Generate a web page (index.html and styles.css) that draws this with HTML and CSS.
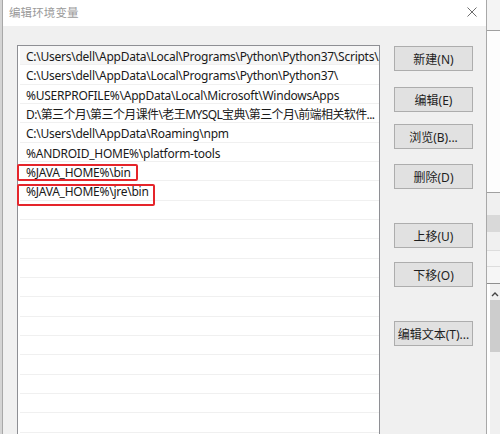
FILE: index.html
```html
<!DOCTYPE html>
<html lang="zh-CN">
<head>
<meta charset="utf-8">
<title>编辑环境变量</title>
<link rel="stylesheet" href="styles.css">
</head>
<body>
<div class="screen">
  <div class="bg-left"></div>
  <div class="dialog">
    <div class="titlebar">
      <span class="title">编辑环境变量</span>
      <svg class="close" width="10" height="10" viewBox="0 0 10 10"><path d="M0.5 0.5 L9.5 9.5 M9.5 0.5 L0.5 9.5" stroke="#6d6d6d" stroke-width="1" fill="none"/></svg>
    </div>
    <div class="body">
      <div class="list">
        <div class="row first"><span class="txt">C:\Users\dell\AppData\Local\Programs\Python\Python37\Scripts\</span></div>
        <div class="row"><span class="txt">C:\Users\dell\AppData\Local\Programs\Python\Python37\</span></div>
        <div class="row"><span class="txt">%USERPROFILE%\AppData\Local\Microsoft\WindowsApps</span></div>
        <div class="row cjk"><span class="txt">D:\第三个月\第三个月课件\老王MYSQL宝典\第三个月\前端相关软件...</span></div>
        <div class="row"><span class="txt">C:\Users\dell\AppData\Roaming\npm</span></div>
        <div class="row"><span class="txt">%ANDROID_HOME%\platform-tools</span></div>
        <div class="row"><span class="txt">%JAVA_HOME%\bin</span><span class="mark mark-a"></span></div>
        <div class="row"><span class="txt">%JAVA_HOME%\jre\bin</span><span class="mark mark-b"></span></div>
        <div class="row"></div>
        <div class="row"></div>
        <div class="row"></div>
        <div class="row"></div>
        <div class="row"></div>
        <div class="row"></div>
        <div class="row"></div>
        <div class="row"></div>
        <div class="row"></div>
        <div class="row"></div>
        <div class="row"></div>
        <div class="row"></div>
      </div>
      <div class="buttons">
        <button class="btn b-new">新建(N)</button>
        <button class="btn b-edit">编辑(E)</button>
        <button class="btn b-browse">浏览(B)...</button>
        <button class="btn b-del">删除(D)</button>
        <button class="btn b-up">上移(U)</button>
        <button class="btn b-down">下移(O)</button>
        <button class="btn b-text">编辑文本(T)...</button>
      </div>
    </div>
  </div>
  <div class="bg-right">
    <div class="br br-top"></div>
    <div class="br br-white"></div>
    <div class="br br-a"></div>
    <div class="br br-b"></div>
    <div class="br br-c"></div>
    <div class="br br-d"></div>
    <div class="br br-e"></div>
    <div class="br-scroll">
      <div class="sb-gap"></div>
      <div class="sb-track">
        <svg class="sb-arrow" width="8" height="6" viewBox="0 0 8 6"><path d="M1 5 L4 2 L7 5" stroke="#444" stroke-width="1.4" fill="none"/></svg>
        <div class="sb-thumb"></div>
      </div>
    </div>
  </div>
</div>
</body>
</html>
```

FILE: styles.css
```css
html, body {
  margin: 0;
  padding: 0;
  width: 500px;
  height: 434px;
  overflow: hidden;
  background: #f0f0f0;
}

.screen {
  display: flex;
  width: 500px;
  height: 434px;
  font-family: "Noto Sans", "Noto Sans CJK SC", sans-serif;
}

.bg-left {
  width: 2px;
  flex: none;
  background: #d4d4d4;
}

.dialog {
  width: 485px;
  flex: none;
  box-sizing: border-box;
  border-left: 1px solid #a8a8a8;
  border-right: 1px solid #a8a8a8;
  display: flex;
  flex-direction: column;
  background: #f0f0f0;
}

.titlebar {
  height: 26px;
  flex: none;
  background: #ffffff;
  display: flex;
  align-items: center;
  justify-content: space-between;
  padding: 0 9px 3px 6px;
  box-sizing: border-box;
}

.title {
  font-size: 11.5px;
  color: #9a9a9a;
  letter-spacing: 0.1px;
}

.close {
  display: block;
}

.body {
  flex: 1;
  display: flex;
  padding: 19px 13px 0 14px;
  gap: 14px;
  overflow: hidden;
}

.list {
  width: 363px;
  flex: none;
  height: 420px;
  box-sizing: border-box;
  border: 1px solid #8e8f94;
  background: #ffffff;
  padding-left: 2px;
}

.row {
  position: relative;
  height: 19.33px;
  box-sizing: border-box;
  border-bottom: 1px solid #f0f0f0;
  display: flex;
  align-items: flex-start;
  padding: 2px 0 0 6px;
  font-size: 12px;
  letter-spacing: -0.25px;
  color: #1a1a1a;
  white-space: nowrap;
}

.row.first {
  background: #f6f6f6;
}

.row.cjk {
  letter-spacing: -0.6px;
}

.txt {
  line-height: 17px;
}

.mark {
  position: absolute;
  left: -3px;
  border: 2px solid #e5252b;
  border-radius: 2px;
  box-sizing: border-box;
}

.mark-a {
  top: 2px;
  width: 121px;
  height: 17px;
}

.mark-b {
  top: 3px;
  width: 138px;
  height: 22px;
}

.buttons {
  width: 79px;
  flex: none;
  display: flex;
  flex-direction: column;
  padding-top: 1px;
}

.btn {
  height: 25px;
  margin: 0;
  padding: 0;
  box-sizing: border-box;
  border: 1px solid #adadad;
  background: #e1e1e1;
  font-family: "Noto Sans", "Noto Sans CJK SC", sans-serif;
  font-size: 12px;
  color: #1e1e1e;
  text-align: center;
}

.b-edit { margin-top: 16px; }
.b-browse { margin-top: 12px; }
.b-del { margin-top: 15px; }
.b-up { margin-top: 34px; }
.b-down { margin-top: 14px; }
.b-text { margin-top: 34px; }

.bg-right {
  flex: 1;
  display: flex;
  flex-direction: column;
  background: #f0f0f0;
}

.br {
  box-sizing: border-box;
}

.br-top {
  height: 31px;
  background: #f4f4f4;
  border-bottom: 1px solid #a0a0a0;
}

.br-white {
  height: 162px;
  background: #fdfdfd;
  border-bottom: 1px solid #a0a0a0;
}

.br-a {
  height: 22px;
  background: #f0f0f0;
}

.br-b {
  height: 17px;
  background: #d9d9d9;
}

.br-c {
  height: 19px;
  background: #f0f0f0;
  border-bottom: 1px solid #dddddd;
}

.br-d {
  height: 16px;
  background: #f6f6f6;
  border-bottom: 1px solid #dddddd;
}

.br-e {
  height: 17px;
  background: #f6f6f6;
  border-bottom: 1px solid #8f8f8f;
}

.br-scroll {
  flex: 1;
  display: flex;
}

.sb-gap {
  width: 3px;
  background: #ffffff;
}

.sb-track {
  flex: 1;
  background: #f0f0f0;
  display: flex;
  flex-direction: column;
  align-items: center;
  padding-top: 7px;
}

.sb-arrow {
  display: block;
}

.sb-thumb {
  margin-top: 3px;
  width: 100%;
  height: 52px;
  background: #cdcdcd;
}
```
